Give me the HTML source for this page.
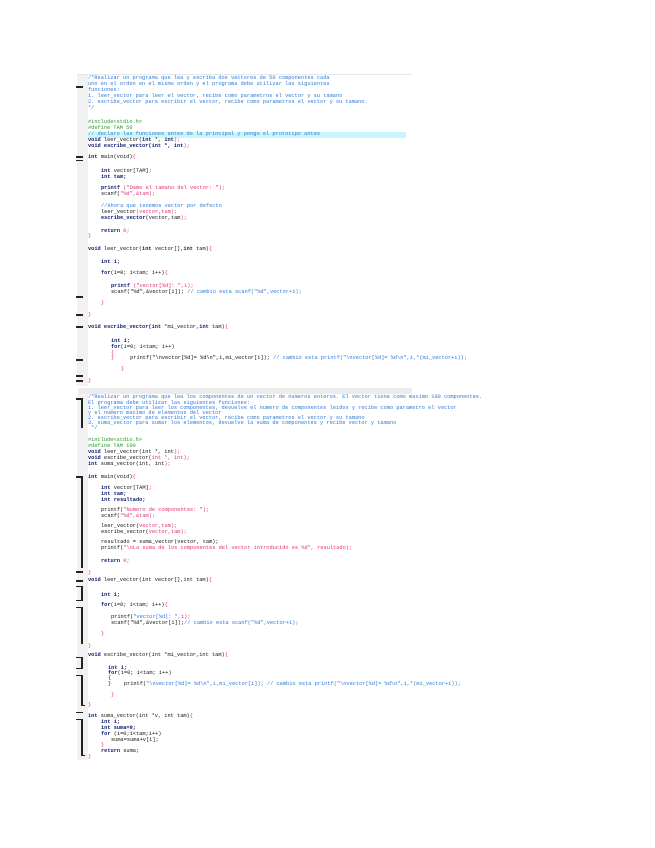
<!DOCTYPE html>
<html><head><meta charset="utf-8"><style>
html,body{margin:0;padding:0;background:#fff;width:655px;height:848px;overflow:hidden;position:relative}
.l{position:absolute;font:5.3px/6px "Liberation Mono",monospace;white-space:pre;color:#111;}
.c{color:#2f7ad8}.k{color:#0b1a6e;font-weight:bold}.s{color:#e0307a}.g{color:#2a9a2a}.b{color:#444}
.m{position:absolute;background:#222}
.gut{position:absolute;background:#f1f1f1}
</style></head><body>
<div class="gut" style="left:77px;top:74px;width:11px;height:312px"></div>
<div class="gut" style="left:77px;top:394px;width:11px;height:366px"></div>
<div style="position:absolute;left:78px;top:74px;width:334px;height:1px;background:#e8e8e8"></div>
<div style="position:absolute;left:78px;top:388px;width:334px;height:6px;background:#ececec"></div>
<div style="position:absolute;left:88px;top:132px;width:318px;height:6px;background:#c9f6fa"></div>

<div class="l c" style="left:88px;top:75px">/*Realizar un programa que lea y escriba dos vectores de 50 componentes cada</div>
<div class="l c" style="left:88px;top:81px">uno en el orden en el mismo orden y el programa debe utilizar las siguientes</div>
<div class="l c" style="left:88px;top:87px">funciones:</div>
<div class="l c" style="left:88px;top:93px">1. leer_vector para leer el vector, recibe como parametros el vector y su tamano</div>
<div class="l c" style="left:88px;top:99px">2. escribe_vector para escribir el vector, recibe como parametros el vector y su tamano.</div>
<div class="l c" style="left:88px;top:105px">*/</div>
<div class="l g" style="left:88px;top:119px">#include&lt;stdio.h&gt;</div>
<div class="l g" style="left:88px;top:125px">#define TAM 50</div>
<div class="l c" style="left:88px;top:131px">// declaro las funciones antes de la principal y pongo el prototipo antes</div>
<div class="l" style="left:88px;top:137px"><span class="k">void</span> leer_vector(<span class="k">int</span> *, <span class="k">int</span><span class="s">);</span></div>
<div class="l" style="left:88px;top:143px"><span class="k">void escribe_vector(int *, int</span><span class="s">);</span></div>
<div class="l" style="left:88px;top:154px"><span class="k">int</span> main(void)<span class="s">{</span></div>
<div class="l" style="left:101px;top:168px"><span class="k">int</span> vector[TAM]<span class="s">;</span></div>
<div class="l k" style="left:101px;top:174px">int tam;</div>
<div class="l" style="left:101px;top:185px"><span class="k">printf</span> <span class="s">("Dame el tamano del vector: ");</span></div>
<div class="l" style="left:101px;top:191px">scanf(<span class="s">"%d",&amp;tam);</span></div>
<div class="l c" style="left:101px;top:203px">//Ahora que tenemos vector por defecto</div>
<div class="l" style="left:101px;top:209px">leer_vector<span class="s">(vector,tam);</span></div>
<div class="l" style="left:101px;top:215px"><span class="k">escribe_vector</span>(vector,tam<span class="s">);</span></div>
<div class="l" style="left:101px;top:228px"><span class="k">return</span> <span class="s">0;</span></div>
<div class="l s" style="left:88px;top:233px">}</div>
<div class="l" style="left:88px;top:246px"><span class="k">void</span> leer_vector(<span class="k">int</span> vector[],<span class="k">int</span> tam)<span class="s">{</span></div>
<div class="l k" style="left:101px;top:259px">int i;</div>
<div class="l" style="left:101px;top:270px"><span class="k">for</span>(i=0; i&lt;tam; i++)<span class="s">{</span></div>
<div class="l" style="left:111px;top:283px"><span class="k">printf</span> <span class="s">("vector[%d]: ",i);</span></div>
<div class="l" style="left:111px;top:289px">scanf("%d",&amp;vector[i]); <span class="c">// cambio esta scanf("%d",vector+i);</span></div>
<div class="l s" style="left:101px;top:300px">}</div>
<div class="l s" style="left:88px;top:312px">}</div>
<div class="l" style="left:88px;top:324px"><span class="k">void escribe_vector(int</span> *mi_vector,<span class="k">int</span> tam)<span class="s">{</span></div>
<div class="l k" style="left:111px;top:338px">int i;</div>
<div class="l" style="left:111px;top:344px"><span class="k">for</span>(i=0; i&lt;tam; i++)</div>
<div class="l s" style="left:111px;top:350px">{</div>
<div class="l" style="left:111px;top:355px"><span class="s">}</span>     printf("\nvector[%d]= %d\n",i,mi_vector[i]); <span class="c">// cambio esta printf("\nvector[%d]= %d\n",i,*(mi_vector+i));</span></div>
<div class="l s" style="left:121px;top:366px">}</div>
<div class="l s" style="left:88px;top:378px">}</div>

<div class="l c" style="left:88px;top:394px">/*Realizar un programa que lea los componentes de un vector de numeros enteros. El vector tiene como maximo 100 componentes.</div>
<div class="l c" style="left:88px;top:400px">El programa debe utilizar las siguientes funciones:</div>
<div class="l c" style="left:88px;top:405px">1. leer_vector para leer los componentes, devuelve el numero de componentes leidos y recibe como parametro el vector</div>
<div class="l c" style="left:88px;top:410px">y el numero maximo de elementos del vector</div>
<div class="l c" style="left:88px;top:415px">2. escribe_vector para escribir el vector, recibe como parametros el vector y su tamano</div>
<div class="l c" style="left:88px;top:420px">3. suma_vector para sumar los elementos, devuelve la suma de componentes y recibe vector y tamano</div>
<div class="l c" style="left:88px;top:425px"> */</div>
<div class="l g" style="left:88px;top:437px">#include&lt;stdio.h&gt;</div>
<div class="l g" style="left:88px;top:443px">#define TAM 100</div>
<div class="l" style="left:88px;top:449px"><span class="k">void</span> leer_vector(int *, int<span class="s">);</span></div>
<div class="l" style="left:88px;top:455px"><span class="k">void</span> escribe_vector(<span class="s">int *, int);</span></div>
<div class="l" style="left:88px;top:461px"><span class="k">int</span> suma_vector(int, int<span class="s">);</span></div>
<div class="l" style="left:88px;top:474px"><span class="k">int</span> main(void)<span class="s">{</span></div>
<div class="l" style="left:101px;top:485px"><span class="k">int</span> vector[TAM]<span class="s">;</span></div>
<div class="l k" style="left:101px;top:491px">int tam;</div>
<div class="l k" style="left:101px;top:497px">int resultado;</div>
<div class="l" style="left:101px;top:507px">printf(<span class="s">"Numero de componentes: ");</span></div>
<div class="l" style="left:101px;top:513px">scanf(<span class="s">"%d",&amp;tam);</span></div>
<div class="l" style="left:101px;top:523px">leer_vector(<span class="s">vector,tam);</span></div>
<div class="l" style="left:101px;top:529px">escribe_vector(<span class="s">vector,tam);</span></div>
<div class="l" style="left:101px;top:539px">resultado = suma_vector(vector, tam);</div>
<div class="l" style="left:101px;top:545px">printf(<span class="s">"\nLa suma de los componentes del vector introducido es %d", resultado);</span></div>
<div class="l" style="left:101px;top:558px"><span class="k">return</span> <span class="s">0;</span></div>
<div class="l s" style="left:88px;top:570px">}</div>
<div class="l" style="left:88px;top:577px"><span class="k">void</span> leer_vector(int vector[],int tam)<span class="s">{</span></div>
<div class="l k" style="left:101px;top:592px">int i;</div>
<div class="l" style="left:101px;top:602px"><span class="k">for</span>(i=0; i&lt;tam; i++)<span class="s">{</span></div>
<div class="l" style="left:111px;top:614px">printf(<span class="c">"vector[%d]: "</span><span class="s">,i);</span></div>
<div class="l" style="left:111px;top:620px">scanf("%d",&amp;vector[i]);<span class="c">// cambio esta scanf("%d",vector+i);</span></div>
<div class="l s" style="left:101px;top:631px">}</div>
<div class="l s" style="left:88px;top:643px">}</div>
<div class="l" style="left:88px;top:652px"><span class="k">void</span> escribe_vector(int *mi_vector,int tam)<span class="s">{</span></div>
<div class="l k" style="left:108px;top:665px">int i;</div>
<div class="l" style="left:108px;top:670px"><span class="k">for</span>(i=0; i&lt;tam; i++)</div>
<div class="l" style="left:108px;top:675px">{</div>
<div class="l" style="left:108px;top:681px">}    printf(<span class="c">"\nvector[%d]= %d\n",i,mi_vector[i]); // cambio esta printf("\nvector[%d]= %d\n",i,*(mi_vector+i));</span></div>
<div class="l s" style="left:111px;top:692px">}</div>
<div class="l s" style="left:88px;top:702px">}</div>
<div class="l" style="left:88px;top:713px"><span class="k">int</span> suma_vector(int *v, int tam)<span class="s">{</span></div>
<div class="l k" style="left:101px;top:719px">int i;</div>
<div class="l k" style="left:101px;top:725px">int suma=0;</div>
<div class="l" style="left:101px;top:731px"><span class="k">for</span> (i=0;i&lt;tam;i++)</div>
<div class="l" style="left:111px;top:737px">suma=suma+v[i];</div>
<div class="l s" style="left:101px;top:742px">}</div>
<div class="l" style="left:101px;top:748px"><span class="k">return</span> suma;</div>
<div class="l s" style="left:88px;top:754px">}</div>

<!-- gutter markers block1 -->
<div class="m" style="left:76px;top:86px;width:7px;height:2px"></div>
<div class="m" style="left:76px;top:156px;width:7px;height:2px"></div>
<div class="m" style="left:76px;top:160px;width:7px;height:1px"></div>
<div class="m" style="left:76px;top:296px;width:7px;height:2px"></div>
<div class="m" style="left:76px;top:314px;width:7px;height:2px"></div>
<div class="m" style="left:76px;top:326px;width:7px;height:2px"></div>
<div class="m" style="left:76px;top:359px;width:7px;height:2px"></div>
<div class="m" style="left:76px;top:375px;width:7px;height:2px"></div>
<div class="m" style="left:76px;top:380px;width:7px;height:2px"></div>
<!-- block2 -->
<div class="m" style="left:76px;top:398px;width:7px;height:2px"></div>
<div class="m" style="left:81px;top:400px;width:2px;height:28px"></div>
<div class="m" style="left:76px;top:476px;width:7px;height:2px"></div>
<div class="m" style="left:81px;top:478px;width:2px;height:90px"></div>
<div class="m" style="left:76px;top:571px;width:7px;height:2px"></div>
<div class="m" style="left:76px;top:580px;width:7px;height:2px"></div>
<div class="m" style="left:81px;top:586px;width:2px;height:15px"></div>
<div class="m" style="left:76px;top:586px;width:7px;height:1px"></div>
<div class="m" style="left:76px;top:600px;width:7px;height:1px"></div>
<div class="m" style="left:76px;top:607px;width:7px;height:1px"></div>
<div class="m" style="left:81px;top:607px;width:2px;height:37px"></div>
<div class="m" style="left:76px;top:657px;width:7px;height:1px"></div>
<div class="m" style="left:81px;top:657px;width:2px;height:12px"></div>
<div class="m" style="left:76px;top:668px;width:7px;height:1px"></div>
<div class="m" style="left:76px;top:675px;width:7px;height:1px"></div>
<div class="m" style="left:81px;top:675px;width:2px;height:30px"></div>
<div class="m" style="left:81px;top:705px;width:4px;height:1px"></div>
<div class="m" style="left:76px;top:712px;width:7px;height:1px"></div>
<div class="m" style="left:76px;top:719px;width:7px;height:1px"></div>
<div class="m" style="left:81px;top:719px;width:2px;height:36px"></div>
<div class="m" style="left:81px;top:755px;width:4px;height:1px"></div>
</body></html>
